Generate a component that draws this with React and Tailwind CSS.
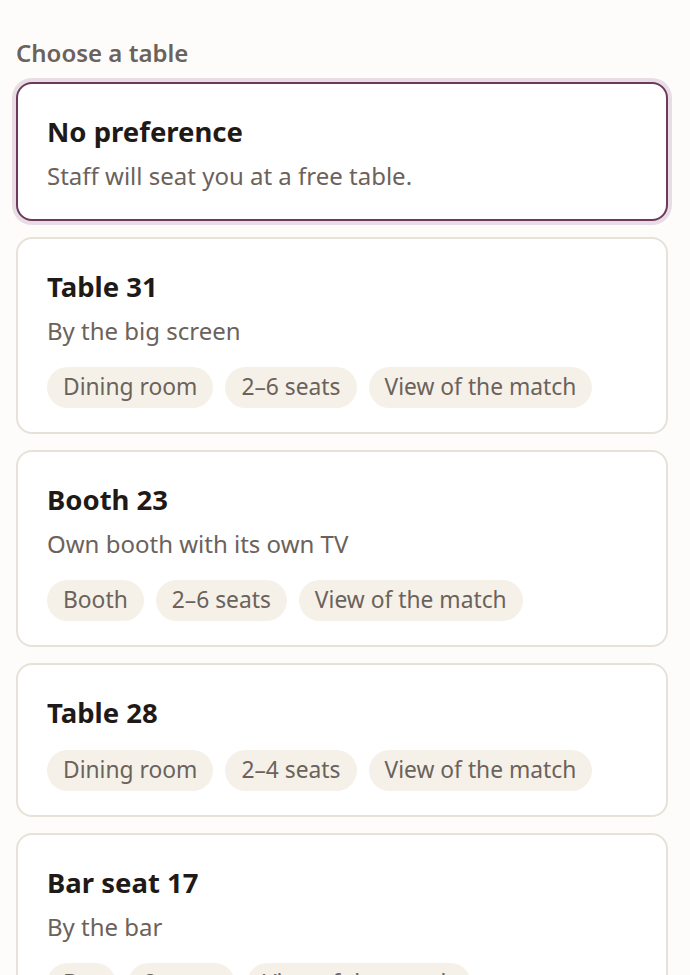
import React, { useState } from 'react';

const tables = [
  { id: 'none', name: 'No preference', note: 'Staff will seat you at a free table.', tags: [] },
  { id: 't31', name: 'Table 31', note: 'By the big screen', tags: ['Dining room', '2–6 seats', 'View of the match'] },
  { id: 'b23', name: 'Booth 23', note: 'Own booth with its own TV', tags: ['Booth', '2–6 seats', 'View of the match'] },
  { id: 't28', name: 'Table 28', note: null, tags: ['Dining room', '2–4 seats', 'View of the match'] },
  { id: 'bs17', name: 'Bar seat 17', note: 'By the bar', tags: ['Bar', '2 seats', 'View of the match'] },
];

const App = () => {
  const [selected, setSelected] = useState('none');

  return (
    <div className="min-h-screen bg-[#fdfcfa] pt-[38px] pl-4 pr-[22px] pb-10 font-['Noto_Sans',sans-serif] text-[#1f1a17]">
      <h2 className="text-[24px] leading-[30px] font-semibold text-[#6b625c] mb-[14px]">Choose a table</h2>

      <div className="flex flex-col gap-4">
        {tables.map(t => {
          const active = selected === t.id;
          return (
            <button
              key={t.id}
              onClick={() => setSelected(t.id)}
              className={`w-full text-left bg-white rounded-2xl border-2 pl-[29px] pr-6 pt-[31px] ${
                t.tags.length ? 'pb-[24px]' : 'pb-[28px]'
              } ${active ? 'border-[#6b3a5c] ring-4 ring-[#e8dde5]' : 'border-[#e7e2d8]'}`}
            >
              <div className="text-[27.5px] leading-[34px] font-bold text-[#1f1a17]">{t.name}</div>
              {t.note && (
                <div className="text-[24px] leading-[30px] text-[#6b625c] mt-[12px]">{t.note}</div>
              )}
              {t.tags.length > 0 && (
                <div className={`flex flex-wrap gap-3 ${t.note ? 'mt-[21px]' : 'mt-[20px]'}`}>
                  {t.tags.map(tag => (
                    <span
                      key={tag}
                      className="h-[41px] px-[16px] flex items-center rounded-full bg-[#f5f1e8] text-[22.8px] text-[#6b625c]"
                    >
                      {tag}
                    </span>
                  ))}
                </div>
              )}
            </button>
          );
        })}
      </div>
    </div>
  );
};

export default App;
